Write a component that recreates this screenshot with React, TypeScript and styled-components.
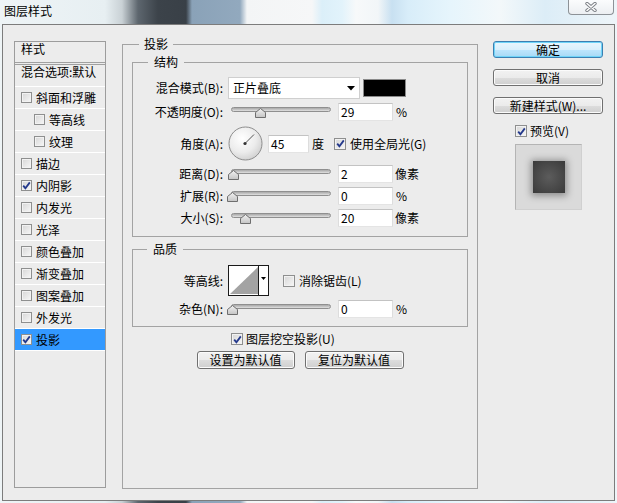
import styled, { createGlobalStyle } from 'styled-components';

const GlobalStyle = createGlobalStyle`
  * { box-sizing: border-box; }
  html, body { margin: 0; padding: 0; }
  body {
    font-family: "Noto Sans CJK SC", "Liberation Sans", sans-serif;
    font-size: 12px;
    line-height: 14px;
    color: #000;
  }
`;

// aero glass frame behind the dialog
const Screen = styled.div`
  width: 617px;
  height: 503px;
  overflow: hidden;
  display: flex;
  flex-direction: column;
  background: linear-gradient(
    90deg,
    #eef4f6 0px,
    #e7eff2 105px,
    #c9d1d5 122px,
    #5d666e 138px,
    #3c434a 158px,
    #394047 186px,
    #8aa2b8 192px,
    #92a9be 240px,
    #f3f5f6 247px,
    #f6f7f8 312px,
    #dbeff9 322px,
    #e2f3fb 342px,
    #f7f9fa 356px,
    #f2f6f8 378px,
    #c8e0f1 392px,
    #d8edf9 408px,
    #e6f5fc 450px,
    #f3f8fa 500px,
    #dcedf7 545px,
    #eef5f9 617px
  );
`;

const TitleBar = styled.div`
  height: 24px;
  flex: none;
  display: flex;
  justify-content: space-between;
  align-items: flex-start;
`;

const Caption = styled.div`
  margin: 4px 0 0 4px;
`;

const CloseButton = styled.div`
  width: 46px;
  height: 15px;
  margin-right: 3px;
  border: 1px solid #8d9297;
  border-top: none;
  border-radius: 0 0 4px 4px;
  background: linear-gradient(#fbfcfd, #eceff2);
  display: flex;
  align-items: center;
  justify-content: center;
`;

const DialogBody = styled.div`
  height: 477px;
  margin: 0 2px;
  border: 1px solid #7c7c7c;
  background: #ececec;
  display: flex;
  align-items: flex-start;
  padding: 12px 11px 0 11px;
`;

/* ---------- left list ---------- */

const StyleList = styled.div`
  margin-top: 4px;
  width: 92px;
  height: 447px;
  border: 1px solid #9c9c9c;
  display: flex;
  flex-direction: column;
  overflow: hidden;
`;

const ListHeader = styled.div`
  height: 21px;
  padding-left: 6px;
  border-bottom: 1px solid #a0a0a0;
  white-space: nowrap;
`;

const BlendItem = styled.div`
  height: 23px;
  margin-top: 1px;
  padding-left: 6px;
  border-top: 1px solid #a0a0a0;
  border-bottom: 1px solid #fff;
  white-space: nowrap;
`;

const StyleItem = styled.div<{ $indent?: boolean; $selected?: boolean }>`
  height: 22px;
  flex: none;
  display: flex;
  align-items: center;
  gap: 4px;
  padding-left: ${(p) => (p.$indent ? 19 : 6)}px;
  border-bottom: 1px solid #fff;
  background: ${(p) => (p.$selected ? '#3399ff' : 'transparent')};
  white-space: nowrap;
`;

const Box = styled.span<{ $size?: number }>`
  width: ${(p) => p.$size ?? 11}px;
  height: ${(p) => p.$size ?? 11}px;
  flex: none;
  border: 1px solid #8e8f8f;
  background: linear-gradient(135deg, #d6d6d6, #f7f7f7);
  box-shadow: inset 0 0 0 1px #f2f2f2;
  display: flex;
  align-items: center;
  justify-content: center;
`;

const Check = ({ checked, size }: { checked?: boolean; size?: number }) => (
  <Box $size={size}>
    {checked && (
      <svg width="9" height="9" viewBox="0 0 9 9">
        <path d="M1.2 4.6 L3.4 7.2 L7.8 1.4" fill="none" stroke="#24398c" strokeWidth="1.8" />
      </svg>
    )}
  </Box>
);

/* ---------- main panel ---------- */

const MainGroup = styled.fieldset`
  margin: 0 0 0 16px;
  padding: 0;
  width: 356px;
  height: 452px;
  min-inline-size: 0;
  border: 1px solid #a3a3a3;
  display: flex;
  flex-direction: column;
`;

const GroupTitle = styled.legend<{ $ml?: number; $pad?: number }>`
  margin-left: ${(p) => p.$ml ?? 16}px;
  padding: 0 ${(p) => p.$pad ?? 5}px;
  line-height: 14px;
`;

const SubGroup = styled.fieldset<{ $mt: number; $pt: number; $pb: number }>`
  margin: ${(p) => p.$mt}px 9px 0;
  padding: ${(p) => p.$pt}px 0 ${(p) => p.$pb}px;
  min-inline-size: 0;
  border: 1px solid #a3a3a3;
`;

const FieldRow = styled.div<{ $h: number; $mt?: number }>`
  height: ${(p) => p.$h}px;
  margin-top: ${(p) => p.$mt ?? 0}px;
  display: flex;
  align-items: center;
  white-space: nowrap;
`;

const FieldLabel = styled.span`
  width: 90px;
  margin-right: 5px;
  text-align: right;
`;

const SelectBox = styled.div`
  width: 132px;
  height: 22px;
  border: 1px solid #cfcfcf;
  background: #fff;
  display: flex;
  align-items: center;
  justify-content: space-between;
  padding: 0 4px 0 4px;
`;

const Swatch = styled.div`
  width: 43px;
  height: 18px;
  margin-left: 3px;
  border: 1px solid #8a8a8a;
  background: #000;
`;

const TextInput = styled.div<{ $w?: number }>`
  width: ${(p) => p.$w ?? 55}px;
  height: 18px;
  border: 1px solid;
  border-color: #c3c3c3 #dddddd #e4e4e4 #dddddd;
  background: #fff;
  padding-left: 2px;
  display: flex;
  align-items: center;
`;

const Unit = styled.span<{ $ml?: number }>`
  margin-left: ${(p) => p.$ml ?? 2}px;
`;

const SliderWrap = styled.div`
  position: relative;
  width: 100px;
  height: 18px;
  margin: 0 7px 0 3px;
`;

const SliderTrack = styled.div`
  margin-top: 4px;
  height: 5px;
  border: 1px solid #8f8f8f;
  border-radius: 3px;
  background: linear-gradient(#a9a9a9, #c8c8c8 60%, #e2e2e2);
`;

const SliderThumb = styled.svg`
  position: absolute;
  top: 5px;
`;

const Slider = ({ pos }: { pos: number }) => (
  <SliderWrap>
    <SliderTrack />
    <SliderThumb width="11" height="10" viewBox="0 0 11 10" style={{ left: pos - 5 }}>
      <defs>
        <linearGradient id="thumbFill" x1="0" y1="0" x2="0" y2="1">
          <stop offset="0" stopColor="#f2f2f2" />
          <stop offset="1" stopColor="#c4c4c4" />
        </linearGradient>
      </defs>
      <path d="M5.5 0.5 L10.5 4.5 L10.5 9.5 L0.5 9.5 L0.5 4.5 Z" fill="url(#thumbFill)" stroke="#6e6e6e" />
    </SliderThumb>
  </SliderWrap>
);

const CheckLabel = styled.label<{ $ml?: number; $gap?: number }>`
  margin-left: ${(p) => p.$ml ?? 0}px;
  display: flex;
  align-items: center;
  gap: ${(p) => p.$gap ?? 4}px;
  white-space: nowrap;
`;

const KnockoutRow = styled.div`
  height: 14px;
  margin: 5px 0 0 108px;
  display: flex;
  align-items: center;
  gap: 3px;
  white-space: nowrap;
`;

const ButtonRow = styled.div`
  margin-top: 5px;
  display: flex;
  justify-content: center;
  gap: 10px;
`;

const PushButton = styled.div<{ $w?: number; $h?: number; $default?: boolean }>`
  width: ${(p) => p.$w ?? 110}px;
  height: ${(p) => p.$h ?? 17}px;
  border: 1px solid ${(p) => (p.$default ? '#3c7fb1' : '#707070')};
  border-radius: 3px;
  background: ${(p) =>
    p.$default
      ? 'linear-gradient(#eaf6fd 0%, #d9f0fc 50%, #bee6fd 51%, #a7d9f5 100%)'
      : 'linear-gradient(#f2f2f2 0%, #ebebeb 50%, #dddddd 51%, #cfcfcf 100%)'};
  box-shadow: inset 0 0 0 1px ${(p) => (p.$default ? '#6fd4f8' : '#fbfbfb')};
  display: flex;
  align-items: center;
  justify-content: center;
  white-space: nowrap;
`;

/* ---------- right column ---------- */

const SideColumn = styled.div`
  margin: 4px 0 0 15px;
  width: 110px;
  display: flex;
  flex-direction: column;
  gap: 11px;
`;

const PreviewToggle = styled(CheckLabel)`
  margin: -1px 0 0 22px;
  height: 14px;
`;

const PreviewBox = styled.div`
  margin: -5px 0 0 22px;
  width: 67px;
  height: 66px;
  border: 1px solid;
  border-color: #b4b4b4 #d0d0d0 #d0d0d0 #b4b4b4;
  background: #dadada;
  display: flex;
  align-items: center;
  justify-content: center;
`;

const PreviewSquare = styled.div`
  width: 32px;
  height: 32px;
  background: radial-gradient(circle at 50% 50%, #5c5c5c, #3a3a3a);
  box-shadow: 0 1px 7px 2px rgba(0, 0, 0, 0.35);
`;

const listItems: { name: string; indent?: boolean; checked?: boolean; selected?: boolean }[] = [
  { name: '斜面和浮雕' },
  { name: '等高线', indent: true },
  { name: '纹理', indent: true },
  { name: '描边' },
  { name: '内阴影', checked: true },
  { name: '内发光' },
  { name: '光泽' },
  { name: '颜色叠加' },
  { name: '渐变叠加' },
  { name: '图案叠加' },
  { name: '外发光' },
  { name: '投影', checked: true, selected: true },
];

const Dial = () => (
  <svg width="35" height="35" viewBox="0 0 35 35">
    <defs>
      <radialGradient id="dialFill" cx="0.4" cy="0.35" r="0.7">
        <stop offset="0" stopColor="#ffffff" />
        <stop offset="0.6" stopColor="#ececec" />
        <stop offset="1" stopColor="#cfcfcf" />
      </radialGradient>
    </defs>
    <circle cx="17.5" cy="17.5" r="16.5" fill="url(#dialFill)" stroke="#8d8d8d" />
    <line x1="17" y1="17.5" x2="26" y2="8.5" stroke="#555" strokeWidth="1" />
    <circle cx="17" cy="17.5" r="1.6" fill="#333" />
  </svg>
);

const ContourPicker = () => (
  <svg width="41" height="31" viewBox="0 0 41 31">
    <rect x="0.5" y="0.5" width="40" height="30" fill="#fff" stroke="#1a1a1a" />
    <path d="M2 29 L30 2 L30 29 Z" fill="#a3a3a3" />
    <line x1="30.5" y1="1" x2="30.5" y2="30" stroke="#1a1a1a" />
    <path d="M33 12 L38 12 L35.5 15 Z" fill="#000" />
  </svg>
);

export default function App() {
  return (
    <Screen>
      <GlobalStyle />
      <TitleBar>
        <Caption>图层样式</Caption>
        <CloseButton>
          <svg width="14" height="10" viewBox="0 0 14 10">
            <path d="M3 1.5 L11 8.5 M11 1.5 L3 8.5" stroke="#7b7f85" strokeWidth="3.4" strokeLinecap="round" />
            <path d="M3 1.5 L11 8.5 M11 1.5 L3 8.5" stroke="#fdfdfd" strokeWidth="1.6" strokeLinecap="round" />
          </svg>
        </CloseButton>
      </TitleBar>

      <DialogBody>
        <StyleList>
          <ListHeader>样式</ListHeader>
          <BlendItem>混合选项:默认</BlendItem>
          {listItems.map((item) => (
            <StyleItem key={item.name} $indent={item.indent} $selected={item.selected}>
              <Check checked={item.checked} />
              {item.name}
            </StyleItem>
          ))}
        </StyleList>

        <MainGroup>
          <GroupTitle>投影</GroupTitle>

          <SubGroup $mt={4} $pt={8} $pb={9}>
            <GroupTitle $ml={15} $pad={6}>结构</GroupTitle>
            <FieldRow $h={22}>
              <FieldLabel>混合模式(B):</FieldLabel>
              <SelectBox>
                正片叠底
                <svg width="8" height="5" viewBox="0 0 8 5">
                  <path d="M0 0 L8 0 L4 4.5 Z" fill="#000" />
                </svg>
              </SelectBox>
              <Swatch />
            </FieldRow>
            <FieldRow $h={18} $mt={4}>
              <FieldLabel>不透明度(O):</FieldLabel>
              <Slider pos={29} />
              <TextInput>29</TextInput>
              <Unit $ml={3}>%</Unit>
            </FieldRow>
            <FieldRow $h={35} $mt={5}>
              <FieldLabel>角度(A):</FieldLabel>
              <Dial />
              <TextInput $w={41} style={{ marginLeft: 5 }}>45</TextInput>
              <Unit $ml={3}>度</Unit>
              <CheckLabel $ml={10} $gap={4}>
                <Check checked size={12} />
                使用全局光(G)
              </CheckLabel>
            </FieldRow>
            <FieldRow $h={18} $mt={4}>
              <FieldLabel>距离(D):</FieldLabel>
              <Slider pos={2} />
              <TextInput>2</TextInput>
              <Unit>像素</Unit>
            </FieldRow>
            <FieldRow $h={18} $mt={4}>
              <FieldLabel>扩展(R):</FieldLabel>
              <Slider pos={1} />
              <TextInput>0</TextInput>
              <Unit $ml={3}>%</Unit>
            </FieldRow>
            <FieldRow $h={18} $mt={4}>
              <FieldLabel>大小(S):</FieldLabel>
              <Slider pos={14} />
              <TextInput>20</TextInput>
              <Unit>像素</Unit>
            </FieldRow>
          </SubGroup>

          <SubGroup $mt={5} $pt={9} $pb={8}>
            <GroupTitle $ml={14} $pad={6}>品质</GroupTitle>
            <FieldRow $h={31}>
              <FieldLabel>等高线:</FieldLabel>
              <ContourPicker />
              <CheckLabel $ml={14} $gap={4}>
                <Check size={12} />
                消除锯齿(L)
              </CheckLabel>
            </FieldRow>
            <FieldRow $h={18} $mt={4}>
              <FieldLabel>杂色(N):</FieldLabel>
              <Slider pos={1} />
              <TextInput>0</TextInput>
              <Unit $ml={3}>%</Unit>
            </FieldRow>
          </SubGroup>

          <KnockoutRow>
            <Check checked size={12} />
            图层挖空投影(U)
          </KnockoutRow>

          <ButtonRow>
            <PushButton $w={98} $h={18}>设置为默认值</PushButton>
            <PushButton $w={99} $h={18}>复位为默认值</PushButton>
          </ButtonRow>
        </MainGroup>

        <SideColumn>
          <PushButton $default>确定</PushButton>
          <PushButton>取消</PushButton>
          <PushButton>新建样式(W)...</PushButton>
          <PreviewToggle $gap={3}>
            <Check checked size={12} />
            预览(V)
          </PreviewToggle>
          <PreviewBox>
            <PreviewSquare />
          </PreviewBox>
        </SideColumn>
      </DialogBody>
    </Screen>
  );
}
